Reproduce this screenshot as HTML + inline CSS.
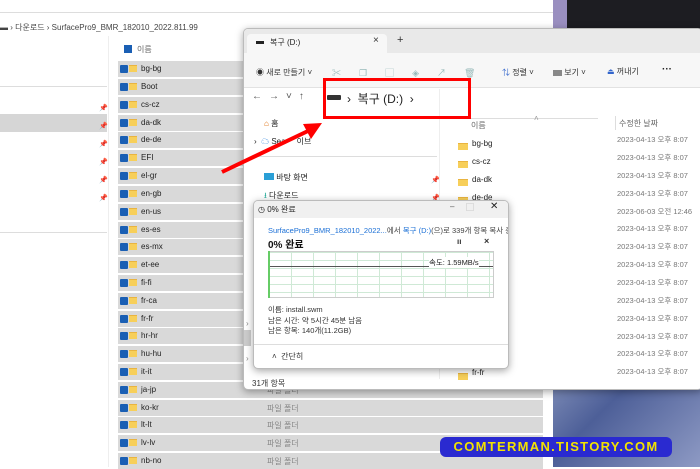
<!DOCTYPE html>
<html><head><meta charset="utf-8"><style>
*{margin:0;padding:0;box-sizing:border-box}
body{width:700px;height:467px;overflow:hidden;position:relative;background:#fff;font-family:"Liberation Sans","Noto Sans CJK KR",sans-serif;font-size:8px;color:#333}
.a{position:absolute;white-space:nowrap}
.row{position:absolute;left:118px;width:425px;height:16px;background:#d9d9d9}
.cb{position:absolute;left:2px;top:4px;width:8px;height:8px;background:#1a5fb4;border-radius:1px}
.fd{position:absolute;left:11px;top:4px;width:8px;height:7px;background:#f7cf5a;border-top:1px solid #e9b440}
.nm{position:absolute;left:23px;top:3px;font-size:8px;color:#222}
.pf{position:absolute;left:149px;top:3px;color:#888}
.date{position:absolute;left:617px;color:#777;font-size:7.5px}
.mf{position:absolute;left:457px;width:10px;height:7px;background:#f7cf5a;border-top:1px solid #e9b440}
</style></head><body>
<div class="a" style="left:553px;top:0;width:147px;height:467px;background:linear-gradient(135deg,#6f7fb0,#b9c3dc 45%,#4d5f98 75%,#8e9ac4)"></div>
<div class="a" style="left:553px;top:0;width:147px;height:30px;background:#1d1d22"></div>
<div class="a" style="left:553px;top:0;width:14px;height:30px;background:#9a8fc0"></div>
<div class="a" style="left:0;top:0;width:553px;height:467px;background:#fff"></div>
<div class="a" style="left:0;top:12px;width:553px;height:1px;background:#ddd"></div>
<div class="a" style="left:0;top:22px;font-size:8px;color:#444">▬ › 다운로드 › SurfacePro9_BMR_182010_2022.811.99</div>
<div class="a" style="left:0;top:86px;width:107px;height:1px;background:#ddd"></div>
<div class="a" style="left:0;top:114px;width:107px;height:18px;background:#d6d6d6"></div>
<div class="a" style="left:0;top:232px;width:107px;height:1px;background:#ddd"></div>
<div class="a" style="left:108px;top:36px;width:1px;height:431px;background:#eee"></div>
<div class="a" style="left:99px;top:100px;color:#888;font-size:7px;line-height:18px">📌<br>📌<br>📌<br>📌<br>📌<br>📌</div>
<div class="a" style="left:124px;top:45px;width:8px;height:8px;background:#1a5fb4"></div>
<div class="a" style="left:137px;top:44px;color:#666">이름</div>
<div class="row" style="top:61px"><div class="cb"></div><div class="fd"></div><div class="nm">bg-bg</div></div>
<div class="row" style="top:79px"><div class="cb"></div><div class="fd"></div><div class="nm">Boot</div></div>
<div class="row" style="top:97px"><div class="cb"></div><div class="fd"></div><div class="nm">cs-cz</div></div>
<div class="row" style="top:115px"><div class="cb"></div><div class="fd"></div><div class="nm">da-dk</div></div>
<div class="row" style="top:132px"><div class="cb"></div><div class="fd"></div><div class="nm">de-de</div></div>
<div class="row" style="top:150px"><div class="cb"></div><div class="fd"></div><div class="nm">EFI</div></div>
<div class="row" style="top:168px"><div class="cb"></div><div class="fd"></div><div class="nm">el-gr</div></div>
<div class="row" style="top:186px"><div class="cb"></div><div class="fd"></div><div class="nm">en-gb</div></div>
<div class="row" style="top:204px"><div class="cb"></div><div class="fd"></div><div class="nm">en-us</div></div>
<div class="row" style="top:222px"><div class="cb"></div><div class="fd"></div><div class="nm">es-es</div></div>
<div class="row" style="top:239px"><div class="cb"></div><div class="fd"></div><div class="nm">es-mx</div></div>
<div class="row" style="top:257px"><div class="cb"></div><div class="fd"></div><div class="nm">et-ee</div></div>
<div class="row" style="top:275px"><div class="cb"></div><div class="fd"></div><div class="nm">fi-fi</div></div>
<div class="row" style="top:293px"><div class="cb"></div><div class="fd"></div><div class="nm">fr-ca</div></div>
<div class="row" style="top:311px"><div class="cb"></div><div class="fd"></div><div class="nm">fr-fr</div></div>
<div class="row" style="top:328px"><div class="cb"></div><div class="fd"></div><div class="nm">hr-hr</div></div>
<div class="row" style="top:346px"><div class="cb"></div><div class="fd"></div><div class="nm">hu-hu</div></div>
<div class="row" style="top:364px"><div class="cb"></div><div class="fd"></div><div class="nm">it-it</div></div>
<div class="row" style="top:382px"><div class="cb"></div><div class="fd"></div><div class="nm">ja-jp</div><div class="pf">파일 폴더</div></div>
<div class="row" style="top:400px"><div class="cb"></div><div class="fd"></div><div class="nm">ko-kr</div><div class="pf">파일 폴더</div></div>
<div class="row" style="top:417px"><div class="cb"></div><div class="fd"></div><div class="nm">lt-lt</div><div class="pf">파일 폴더</div></div>
<div class="row" style="top:435px"><div class="cb"></div><div class="fd"></div><div class="nm">lv-lv</div><div class="pf">파일 폴더</div></div>
<div class="row" style="top:453px"><div class="cb"></div><div class="fd"></div><div class="nm">nb-no</div><div class="pf">파일 폴더</div></div>

<div class="a" style="left:243px;top:28px;width:460px;height:362px;background:#fff;border:1px solid #bbb;border-radius:5px;box-shadow:0 2px 8px rgba(0,0,0,.35);overflow:hidden">
 <div class="a" style="left:0;top:0;width:460px;height:24px;background:#e9e9e9"></div>
 <div class="a" style="left:3px;top:5px;width:140px;height:19px;background:#f7f7f7;border-radius:4px 4px 0 0"></div>
 <div class="a" style="left:12px;top:12px;width:8px;height:3px;background:#222"></div>
 <div class="a" style="left:26px;top:8px;color:#222">복구 (D:)</div>
 <div class="a" style="left:129px;top:6px;font-size:10px;color:#333">×</div>
 <div class="a" style="left:153px;top:5px;font-size:11px;color:#333">+</div>
 <div class="a" style="left:0;top:24px;width:460px;height:35px;background:#f7f7f7;border-bottom:1px solid #e2e2e2"></div>
 <div class="a" style="left:12px;top:38px;color:#333">◉ 새로 만들기 ˅</div>
 <div class="a" style="left:88px;top:37px;color:#9bb;font-size:9px;letter-spacing:18px">✂❐▢◈↗🗑</div>
 <div class="a" style="left:258px;top:38px;color:#333"><span style="color:#36c">⇅</span> 정렬 ˅</div>
 <div class="a" style="left:309px;top:38px;color:#333"><span style="display:inline-block;width:9px;height:6px;background:#888;vertical-align:middle"></span> 보기 ˅</div>
 <div class="a" style="left:363px;top:37px;color:#333"><span style="color:#36c">⏏</span> 꺼내기</div>
 <div class="a" style="left:418px;top:35px;font-size:10px;color:#222;font-weight:bold">···</div>
 <div class="a" style="left:8px;top:62px;color:#555;font-size:10px;letter-spacing:7px">←→˅↑</div>
 <div class="a" style="left:92px;top:66px;width:262px;height:24px;background:#fff;border-bottom:1px solid #ddd"></div>
 <div class="a" style="left:20px;top:89px;color:#222"><span style="color:#d60">⌂</span> 홈</div>
 <div class="a" style="left:10px;top:107px;color:#222">›&nbsp; <span style="color:#1a78d6">☁</span> Sea&nbsp;&nbsp;&nbsp;&nbsp;&nbsp;이브</div>
 <div class="a" style="left:8px;top:127px;width:185px;height:1px;background:#ddd"></div>
 <div class="a" style="left:20px;top:143px;color:#222"><span style="display:inline-block;width:10px;height:7px;background:#2a9fd6"></span> 바탕 화면</div>
 <div class="a" style="left:20px;top:161px;color:#222"><span style="color:#2a9">⭳</span> 다운로드</div>
 <div class="a" style="left:187px;top:143px;color:#999;font-size:7px;line-height:18px">📌<br>📌</div>
 <div class="a" style="left:195px;top:60px;width:1px;height:290px;background:#eee"></div>
 <div class="a" style="left:0;top:301px;width:7px;height:16px;background:#ccc"></div>
 <div class="a" style="left:2px;top:290px;color:#888">›</div>
 <div class="a" style="left:2px;top:325px;color:#888">›</div>
 <div class="a" style="left:8px;top:349px;color:#333">31개 항목</div>
 <div class="a" style="left:227px;top:91px;color:#666">이름</div>
 <div class="a" style="left:290px;top:85px;color:#999">˄</div>
 <div class="a" style="left:371px;top:87px;width:1px;height:14px;background:#ddd"></div>
 <div class="a" style="left:375px;top:89px;color:#666">수정한 날짜</div>
 <div class="mf" style="left:214px;top:114px"></div><div class="a" style="left:228px;top:110px;color:#222">bg-bg</div>
 <div class="mf" style="left:214px;top:132px"></div><div class="a" style="left:228px;top:128px;color:#222">cs-cz</div>
 <div class="mf" style="left:214px;top:150px"></div><div class="a" style="left:228px;top:146px;color:#222">da-dk</div>
 <div class="mf" style="left:214px;top:168px"></div><div class="a" style="left:228px;top:164px;color:#222">de-de</div>
 <div class="mf" style="left:214px;top:344px"></div><div class="a" style="left:228px;top:339px;color:#222">fr-fr</div>
</div>
<div class="date" style="top:134px">2023-04-13 오후 8:07</div>
<div class="date" style="top:152px">2023-04-13 오후 8:07</div>
<div class="date" style="top:170px">2023-04-13 오후 8:07</div>
<div class="date" style="top:188px">2023-04-13 오후 8:07</div>
<div class="date" style="top:206px">2023-06-03 오전 12:46</div>
<div class="date" style="top:223px">2023-04-13 오후 8:07</div>
<div class="date" style="top:241px">2023-04-13 오후 8:07</div>
<div class="date" style="top:259px">2023-04-13 오후 8:07</div>
<div class="date" style="top:277px">2023-04-13 오후 8:07</div>
<div class="date" style="top:295px">2023-04-13 오후 8:07</div>
<div class="date" style="top:313px">2023-04-13 오후 8:07</div>
<div class="date" style="top:331px">2023-04-13 오후 8:07</div>
<div class="date" style="top:348px">2023-04-13 오후 8:07</div>
<div class="date" style="top:366px">2023-04-13 오후 8:07</div>

<div class="a" style="left:323px;top:78px;width:148px;height:41px;border:3px solid #f00"></div>
<div class="a" style="left:327px;top:95px;width:14px;height:5px;background:#333;border-radius:1px"></div>
<div class="a" style="left:347px;top:90px;font-size:12px;color:#222">›&nbsp; 복구 (D:)&nbsp; ›</div>
<svg class="a" style="left:0;top:0" width="700" height="467"><line x1="222" y1="172" x2="308" y2="131" stroke="#f00" stroke-width="4"/><polygon points="322,123 303,124 311,139" fill="#f00"/></svg>

<div class="a" style="left:253px;top:200px;width:256px;height:169px;background:#fff;border:1px solid #bbb;border-radius:5px;box-shadow:0 2px 8px rgba(0,0,0,.35);overflow:hidden">
 <div class="a" style="left:0;top:0;width:256px;height:17px;background:#f0f0f0"></div>
 <div class="a" style="left:4px;top:3px;color:#222">◷ 0% 완료</div>
 <div class="a" style="left:196px;top:1px;color:#555">–</div>
 <div class="a" style="left:212px;top:1px;color:#aaa">▢</div>
 <div class="a" style="left:236px;top:0px;color:#222;font-size:10px">✕</div>
 <div class="a" style="left:14px;top:24px;font-size:7.5px;color:#444"><span style="color:#1a6fd6">SurfacePro9_BMR_182010_2022...</span>에서 <span style="color:#1a6fd6">복구 (D:)</span>(으)로 339개 항목 복사 중</div>
 <div class="a" style="left:14px;top:35px;font-size:10px;color:#111;font-weight:bold">0% 완료</div>
 <div class="a" style="left:203px;top:36px;font-size:8px;font-weight:bold">ıı</div>
 <div class="a" style="left:230px;top:35px;font-size:9px;font-weight:bold">×</div>
 <div class="a" style="left:14px;top:50px;width:226px;height:47px;border:1px solid #ccc;background:#fff;background-image:linear-gradient(90deg,#cfe9d6 1px,transparent 1px),linear-gradient(#cfe9d6 1px,transparent 1px);background-size:22px 8px"></div>
 <div class="a" style="left:15px;top:65px;width:224px;height:1px;background:#555"></div>
 <div class="a" style="left:14px;top:50px;width:2px;height:47px;background:#6c6"></div>
 <div class="a" style="left:175px;top:56px;font-size:7.5px;color:#222;background:#fff">속도: 1.59MB/s</div>
 <div class="a" style="left:14px;top:104px;font-size:7.5px;color:#333;line-height:10.5px">이름: install.swm<br>남은 시간: 약 5시간 45분 남음<br>남은 항목: 140개(11.2GB)</div>
 <div class="a" style="left:0;top:143px;width:256px;height:1px;background:#ddd"></div>
 <div class="a" style="left:18px;top:150px;color:#333">˄&nbsp; 간단히</div>
</div>

<div class="a" style="left:440px;top:437px;width:232px;height:20px;background:#2a2ad0;border-radius:6px;color:#f2e200;font-weight:bold;font-size:13px;letter-spacing:1.3px;text-align:center;line-height:20px">COMTERMAN.TISTORY.COM</div>
</body></html>
